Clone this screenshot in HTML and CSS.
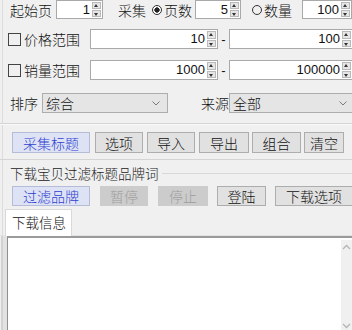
FILE: index.html
```html
<!DOCTYPE html>
<html lang="zh-CN">
<head>
  <meta charset="UTF-8">
  <title>采集</title>
  <link rel="stylesheet" href="styles.css">
</head>
<body>
  <div class="app">
    <div class="row row-start">
      <span class="lbl">起始页</span>
      <div class="spin spin-start"><span class="num">1</span><span class="updown"><i class="up"></i><i class="dn"></i></span></div>
      <span class="lbl collect">采集</span>
      <span class="radio on"></span>
      <span class="lbl radio-lbl">页数</span>
      <div class="spin spin-pages"><span class="num">5</span><span class="updown"><i class="up"></i><i class="dn"></i></span></div>
      <span class="radio radio-count"></span>
      <span class="lbl radio-lbl">数量</span>
      <div class="spin spin-count"><span class="num">100</span><span class="updown"><i class="up"></i><i class="dn"></i></span></div>
    </div>

    <div class="row row-range">
      <span class="chk"></span>
      <span class="lbl range-lbl">价格范围</span>
      <div class="spin spin-min"><span class="num">10</span><span class="updown"><i class="up"></i><i class="dn"></i></span></div>
      <span class="dash">-</span>
      <div class="spin spin-max"><span class="num">100</span><span class="updown"><i class="up"></i><i class="dn"></i></span></div>
    </div>

    <div class="row row-range row-sales">
      <span class="chk"></span>
      <span class="lbl range-lbl">销量范围</span>
      <div class="spin spin-min"><span class="num">1000</span><span class="updown"><i class="up"></i><i class="dn"></i></span></div>
      <span class="dash">-</span>
      <div class="spin spin-max"><span class="num">100000</span><span class="updown"><i class="up"></i><i class="dn"></i></span></div>
    </div>

    <div class="row row-select">
      <span class="lbl">排序</span>
      <div class="select select-sort">综合
        <svg class="chev" width="8" height="5" viewBox="0 0 8 5"><path d="M0.5 0.5 L4 4 L7.5 0.5" fill="none" stroke="#7a7a7a" stroke-width="1"/></svg>
      </div>
      <span class="lbl source">来源</span>
      <div class="select select-source">全部
        <svg class="chev" width="8" height="5" viewBox="0 0 8 5"><path d="M0.5 0.5 L4 4 L7.5 0.5" fill="none" stroke="#7a7a7a" stroke-width="1"/></svg>
      </div>
    </div>

    <div class="toolbar">
      <span class="btn btn-main">采集标题</span>
      <span class="btn b-opt">选项</span>
      <span class="btn b-in">导入</span>
      <span class="btn b-out">导出</span>
      <span class="btn b-comb">组合</span>
      <span class="btn b-clear">清空</span>
    </div>

    <div class="group">
      <div class="group-title">下载宝贝过滤标题品牌词</div>
      <div class="group-btns">
        <span class="btn btn-main">过滤品牌</span>
        <span class="btn disabled b-pause">暂停</span>
        <span class="btn disabled b-stop">停止</span>
        <span class="btn b-login">登陆</span>
        <span class="btn b-dlopt">下载选项</span>
      </div>
    </div>

    <div class="tabs">
      <span class="tab">下载信息</span>
    </div>
    <div class="tab-panel">
      <div class="log"></div>
      <div class="scrollbar">
        <svg width="9" height="6" viewBox="0 0 9 6"><path d="M1 5 L4.5 1.5 L8 5" fill="none" stroke="#b5b5b5" stroke-width="1.3"/></svg>
        <svg width="9" height="6" viewBox="0 0 9 6"><path d="M1 1 L4.5 4.5 L8 1" fill="none" stroke="#b5b5b5" stroke-width="1.3"/></svg>
      </div>
    </div>
  </div>
</body>
</html>
```

FILE: styles.css
```css
body {
  margin: 0;
  width: 352px;
  height: 330px;
  overflow: hidden;
  background: linear-gradient(to right, #f0f0f0 2px, #dcdcdc 2px, #dcdcdc 3px, #f0f0f0 3px);
  font-family: "Noto Sans CJK SC", sans-serif;
  font-weight: 300;
  font-size: 14px;
  color: #111;
}

.app {
  width: 352px;
  overflow: hidden;
}

.row {
  display: flex;
  align-items: center;
  padding-left: 10px;
  height: 20px;
  white-space: nowrap;
}

.row > * {
  flex-shrink: 0;
}

.lbl {
  line-height: 20px;
}

/* first row */
.row-start {
  height: 19px;
}

.spin {
  display: flex;
  height: 100%;
  box-sizing: border-box;
  border: 1px solid #a9a9a9;
  background: #fff;
}

.num {
  flex: 1;
  text-align: right;
  padding-right: 2px;
  font-family: "Liberation Sans", sans-serif;
  font-weight: 400;
  font-size: 13px;
  line-height: 17px;
}

.updown {
  width: 9px;
  margin: 1px 1px 1px 0;
  display: flex;
  flex-direction: column;
  gap: 1px;
}

.updown i {
  flex: 1;
  background: #e6e6e6;
  border: 1px solid #b9b9b9;
  position: relative;
}

.updown i::after {
  content: "";
  position: absolute;
  left: 1px;
  border-left: 2.5px solid transparent;
  border-right: 2.5px solid transparent;
}

.updown .up::after {
  top: 1px;
  border-bottom: 3px solid #333;
}

.updown .dn::after {
  top: 2px;
  border-top: 3px solid #333;
}

.spin-start {
  width: 47px;
  margin-left: 4px;
}

.collect {
  margin-left: 15px;
}

.radio {
  width: 10px;
  height: 10px;
  box-sizing: border-box;
  border: 1px solid #333;
  border-radius: 50%;
  margin-left: 6px;
}

.radio.on {
  background: radial-gradient(circle, #222 2.4px, #fff 2.9px);
}

.radio-count {
  margin-left: 11px;
}

.radio-lbl {
  margin-left: 2px;
}

.spin-pages {
  width: 46px;
  margin-left: 3px;
}

.spin-count {
  width: 50px;
  margin-left: 10px;
}

/* range rows */
.row-range {
  margin-top: 10px;
  padding-left: 8px;
}

.row-sales {
  margin-top: 11px;
}

.chk {
  width: 11px;
  height: 11px;
  border: 1px solid #444;
}

.range-lbl {
  margin-left: 3px;
}

.spin-min {
  width: 128px;
  margin-left: 10px;
}

.dash {
  width: 11px;
  text-align: center;
  font-family: "Liberation Sans", sans-serif;
  font-size: 13px;
}

.spin-max {
  width: 124px;
}

/* select row */
.row-select {
  margin-top: 13px;
}

.select {
  height: 100%;
  box-sizing: border-box;
  border: 1px solid #adadad;
  background: #e5e5e5;
  display: flex;
  align-items: center;
  justify-content: space-between;
  padding: 0 7px 0 3px;
  line-height: 18px;
}

.select-sort {
  width: 126px;
  margin-left: 4px;
}

.source {
  margin-left: 33px;
}

.select-source {
  width: 126px;
}

/* buttons */
.toolbar {
  margin-top: 10px;
  border-top: 1px solid #d4d4d4;
  border-bottom: 1px solid #d4d4d4;
  box-shadow: inset 0 1px 0 #fafafa;
  padding: 8px 0 6px 12px;
  display: flex;
  height: 21px;
}

.btn {
  display: flex;
  align-items: center;
  justify-content: center;
  box-sizing: border-box;
  height: 100%;
  border: 1px solid #adadad;
  background: #e1e1e1;
  line-height: 18px;
  flex-shrink: 0;
}

.btn-main {
  width: 78px;
  background: #dde3f5;
  border-color: #b4bcd8;
  color: #2f3fd0;
}

.b-opt { width: 48px; margin-left: 5px; }
.b-in { width: 48px; margin-left: 4px; }
.b-out { width: 50px; margin-left: 4px; }
.b-comb { width: 49px; margin-left: 3px; }
.b-clear { width: 40px; margin-left: 3px; }

.group-title {
  height: 26px;
  display: flex;
  align-items: center;
  padding-left: 10px;
  font-size: 13.5px;
  color: #222;
}

.group-title::after {
  content: "";
  flex: 1;
  height: 1px;
  background: #d8d8d8;
  margin-left: 3px;
}

.group-btns {
  display: flex;
  height: 20px;
  padding-left: 12px;
}

.btn.disabled {
  background: #cccccc;
  border-color: #cccccc;
  color: #9d9d9d;
}

.b-pause { width: 48px; margin-left: 10px; }
.b-stop { width: 50px; margin-left: 10px; }
.b-login { width: 49px; margin-left: 9px; }
.b-dlopt { width: 78px; margin-left: 9px; }

/* tab */
.tabs {
  margin-top: 3px;
  height: 27px;
  padding-left: 5px;
  display: flex;
  border-bottom: 1px solid #e2e2e2;
  box-sizing: border-box;
}

.tab {
  width: 67px;
  box-sizing: border-box;
  background: #fff;
  border: 1px solid #d9d9d9;
  border-bottom: none;
  padding-left: 6px;
  line-height: 25px;
  font-size: 13.5px;
  height: 27px;
}

.tab-panel {
  display: flex;
  height: 93px;
  margin-left: 7px;
  border-top: 2px solid #9a9a9a;
  border-left: 1px solid #8f8f8f;
  box-shadow: -4px 0 0 #e2e2e2, -6px 0 0 #d2d2d2;
  background: #fff;
}

.log {
  flex: 1;
}

.scrollbar {
  width: 11px;
  margin-top: 2px;
  background: #f0f0f0;
  display: flex;
  flex-direction: column;
  justify-content: space-between;
  align-items: center;
  padding: 4px 0 2px;
  box-sizing: border-box;
}
```
